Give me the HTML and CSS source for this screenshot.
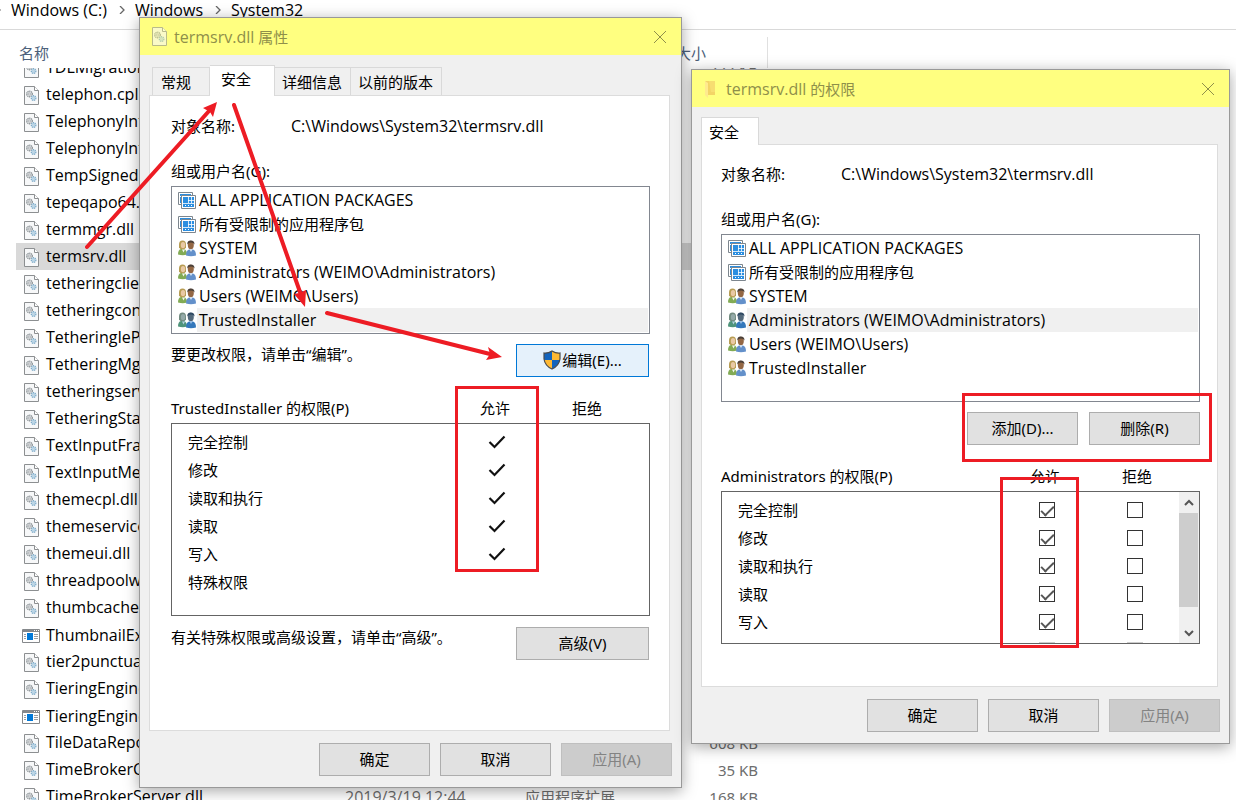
FILE: index.html
```html
<!DOCTYPE html>
<html lang="zh-CN">
<head>
<meta charset="utf-8">
<title>System32</title>
<link rel="stylesheet" href="styles.css">
</head>
<body>
<svg class="defs" aria-hidden="true">
  <defs>
    <symbol id="i-dll" viewBox="0 0 15 19">
      <path d="M.5.5h10l4 4v14H.5z" fill="#f7f8f9" stroke="#8c8f91"/>
      <path d="M10.500.5v4h4" fill="#fff" stroke="#8c8f91"/>
      <circle cx="5.500" cy="8" r="2.800" fill="#dfe2e4" stroke="#92989c" stroke-width="1.400" stroke-dasharray="1.200 .6"/>
      <circle cx="5.500" cy="8" r="1" fill="#fff" stroke="#92989c" stroke-width=".7"/>
      <circle cx="9.600" cy="12" r="2.300" fill="#cfe5f3" stroke="#7fabc8" stroke-width="1.300" stroke-dasharray="1.200 .6"/>
      <circle cx="9.600" cy="12" r=".9" fill="#fff" stroke="#7fabc8" stroke-width=".6"/>
    </symbol>
    <symbol id="i-exe" viewBox="0 0 18 14">
      <path d="M.5.5h17v13H.5z" fill="#fff" stroke="#85888b"/>
      <path d="M1 1h16v2H1z" fill="#85888b"/>
      <path d="M12 1h1v1h-1zM14 1h1v1h-1zM16 1h1v1h-1z" fill="#fff"/>
      <path d="M5 4h6v7H5z" fill="#0078d7"/>
      <path d="M2 5.500h2M2 7.500h2M2 9.500h2M12 5.500h4M12 7.500h4M12 9.500h4" stroke="#9a9da0"/>
    </symbol>
    <symbol id="i-pkg" viewBox="0 0 18 17">
      <path d="M.5.5h14v12H.5z" fill="#fff" stroke="#7d868e"/>
      <path d="M2 2h11v2H2zM2 5h2v6H2z" fill="#2b8ee0"/>
      <path d="M3.500 3.500h14v13h-14z" fill="#fff" stroke="#7d868e"/>
      <path d="M5 5h11v10H5z" fill="#2b8ee0"/>
      <path d="M5 11.500h11M10.500 5v6M13.500 5v6M10 8.500h6" stroke="#fff" stroke-width=".8"/>
      <path d="M7 13.500h1M10 13.500h1M13 13.500h1" stroke="#fff"/>
    </symbol>
    <symbol id="i-users" viewBox="0 0 18 16">
      <path d="M0 14q0-5 3-5.500h3q3 1 3 5.500-4 1.500-9 0z" fill="#82ab55"/>
      <path d="M1 4q0-4 3.500-4T8 4v3q-1 2-3.500 2T1 7z" fill="#b79c53"/>
      <ellipse cx="5" cy="4.600" rx="2.200" ry="3.200" fill="#e9c9a4"/>
      <path d="M4 9l1.500 3L7 9z" fill="#f3f6ee"/>
      <path d="M8 15q0-5 3-6h4q3 1 3 6-5 1.500-10 0z" fill="#6390ca"/>
      <ellipse cx="12.800" cy="4.500" rx="3" ry="4.200" fill="#936744"/>
      <path d="M9.300 4q-.3-4 3.500-4t3.700 4q-1-2-3.500-2T9.300 4z" fill="#4b4039"/>
      <path d="M11.500 8.800l1.500 2.700 1.600-2.700z" fill="#dce8f5"/>
    </symbol>
    <symbol id="i-users-sel" viewBox="0 0 18 16">
      <path d="M0 14q0-5 3-5.500h3q3 1 3 5.500-4 1.500-9 0z" fill="#4f947b"/>
      <path d="M1 4q0-4 3.500-4T8 4v3q-1 2-3.500 2T1 7z" fill="#728b80"/>
      <ellipse cx="5" cy="4.600" rx="2.200" ry="3.200" fill="#95aaa9"/>
      <path d="M4 9l1.500 3L7 9z" fill="#b5cfe0"/>
      <path d="M8 15q0-5 3-6h4q3 1 3 6-5 1.500-10 0z" fill="#3478bb"/>
      <ellipse cx="12.800" cy="4.500" rx="3" ry="4.200" fill="#53697b"/>
      <path d="M9.300 4q-.3-4 3.500-4t3.700 4q-1-2-3.500-2T9.300 4z" fill="#2f4963"/>
      <path d="M11.500 8.800l1.500 2.700 1.600-2.700z" fill="#9cc1e6"/>
    </symbol>
    <symbol id="i-shield" viewBox="0 0 18 20">
      <path d="M9 1Q5 3.500 1 3v6q1 7 8 10z" fill="#1364bd"/>
      <path d="M9 1q4 2.500 8 2v6q-1 7-8 10z" fill="#ffb933"/>
      <path d="M1 10h8v9Q2.500 16 1 10z" fill="#ffb933"/>
      <path d="M9 10h8q-1.500 6-8 9z" fill="#1364bd"/>
      <path d="M9 1Q5 3.500 1 3v6q1 7 8 10 7-3 8-10V3q-4 .5-8-2z" fill="none" stroke="#4c4c4c" stroke-width="1.200"/>
    </symbol>
    <symbol id="i-folder" viewBox="0 0 12 18">
      <path d="M1 1h10v14H4z" fill="#efc35c"/>
      <path d="M5 1h6v11H7z" fill="#f5cf6c"/>
      <path d="M1 1l3 2v15l-3-3z" fill="#ffe294"/>
    </symbol>
    <symbol id="i-close" viewBox="0 0 14 14">
      <path d="M1 1l12 12M13 1L1 13" fill="none" stroke="currentColor"/>
    </symbol>
    <symbol id="i-check" viewBox="0 0 18 14">
      <path d="M1.500 7l5 5L16.500 1.500" fill="none" stroke="#111" stroke-width="2.200"/>
    </symbol>
    <symbol id="i-up" viewBox="0 0 10 8">
      <path d="M1 6l4-4 4 4" fill="none" stroke="#555" stroke-width="2"/>
    </symbol>
    <symbol id="i-down" viewBox="0 0 10 8">
      <path d="M1 2l4 4 4-4" fill="none" stroke="#555" stroke-width="2"/>
    </symbol>
    <symbol id="i-next" viewBox="0 0 6 8">
      <path d="M1 0l4 4-4 4" fill="none" stroke="#666" stroke-width="1.300"/>
    </symbol>
  </defs>
</svg>

<main class="desktop">
  <section class="explorer">
    <nav class="crumbs latin">
      <svg class="sep"><use href="#i-next"/></svg><a href="#">Windows (C:)</a>
      <svg class="sep"><use href="#i-next"/></svg><a href="#">Windows</a>
      <svg class="sep"><use href="#i-next"/></svg><a href="#">System32</a>
    </nav>
    <div class="columns"><span class="c-name">名称</span><span class="c-size">大小</span></div>
    <div class="files">
      <table>
        <colgroup><col class="w-name"><col class="w-date"><col class="w-type"><col class="w-size"></colgroup>
        <tbody>
          <tr><td><svg class="fi"><use href="#i-dll"/></svg>TDLMigration</td><td></td><td></td><td>222 KB</td></tr>
          <tr><td><svg class="fi"><use href="#i-dll"/></svg>telephon.cpl</td><td></td><td></td><td></td></tr>
          <tr><td><svg class="fi"><use href="#i-dll"/></svg>TelephonyInter</td><td></td><td></td><td></td></tr>
          <tr><td><svg class="fi"><use href="#i-dll"/></svg>TelephonyInter</td><td></td><td></td><td></td></tr>
          <tr><td><svg class="fi"><use href="#i-dll"/></svg>TempSigned</td><td></td><td></td><td></td></tr>
          <tr><td><svg class="fi"><use href="#i-dll"/></svg>tepeqapo64.dll</td><td></td><td></td><td></td></tr>
          <tr><td><svg class="fi"><use href="#i-dll"/></svg>termmgr.dll</td><td></td><td></td><td></td></tr>
          <tr class="selected"><td><svg class="fi"><use href="#i-dll"/></svg>termsrv.dll</td><td></td><td></td><td></td></tr>
          <tr><td><svg class="fi"><use href="#i-dll"/></svg>tetheringclient</td><td></td><td></td><td></td></tr>
          <tr><td><svg class="fi"><use href="#i-dll"/></svg>tetheringconfig</td><td></td><td></td><td></td></tr>
          <tr><td><svg class="fi"><use href="#i-dll"/></svg>TetheringIePro</td><td></td><td></td><td></td></tr>
          <tr><td><svg class="fi"><use href="#i-dll"/></svg>TetheringMgr</td><td></td><td></td><td></td></tr>
          <tr><td><svg class="fi"><use href="#i-dll"/></svg>tetheringservice</td><td></td><td></td><td></td></tr>
          <tr><td><svg class="fi"><use href="#i-dll"/></svg>TetheringStation</td><td></td><td></td><td></td></tr>
          <tr><td><svg class="fi"><use href="#i-dll"/></svg>TextInputFramework</td><td></td><td></td><td></td></tr>
          <tr><td><svg class="fi"><use href="#i-dll"/></svg>TextInputMethod</td><td></td><td></td><td></td></tr>
          <tr><td><svg class="fi"><use href="#i-dll"/></svg>themecpl.dll</td><td></td><td></td><td></td></tr>
          <tr><td><svg class="fi"><use href="#i-dll"/></svg>themeservice</td><td></td><td></td><td></td></tr>
          <tr><td><svg class="fi"><use href="#i-dll"/></svg>themeui.dll</td><td></td><td></td><td></td></tr>
          <tr><td><svg class="fi"><use href="#i-dll"/></svg>threadpoolwin</td><td></td><td></td><td></td></tr>
          <tr><td><svg class="fi"><use href="#i-dll"/></svg>thumbcache.dll</td><td></td><td></td><td></td></tr>
          <tr><td><svg class="fi exe"><use href="#i-exe"/></svg>ThumbnailExtract</td><td></td><td></td><td></td></tr>
          <tr><td><svg class="fi"><use href="#i-dll"/></svg>tier2punctuation</td><td></td><td></td><td></td></tr>
          <tr><td><svg class="fi"><use href="#i-dll"/></svg>TieringEngine</td><td></td><td></td><td></td></tr>
          <tr><td><svg class="fi exe"><use href="#i-exe"/></svg>TieringEngine</td><td></td><td></td><td></td></tr>
          <tr><td><svg class="fi"><use href="#i-dll"/></svg>TileDataRepo</td><td></td><td></td><td>608 KB</td></tr>
          <tr><td><svg class="fi"><use href="#i-dll"/></svg>TimeBrokerClient</td><td></td><td></td><td>35 KB</td></tr>
          <tr><td><svg class="fi"><use href="#i-dll"/></svg>TimeBrokerServer.dll</td><td class="latin">2019/3/19 12:44</td><td>应用程序扩展</td><td>168 KB</td></tr>
        </tbody>
      </table>
    </div>
  </section>

  <section class="window props" role="dialog" aria-labelledby="t1">
    <header class="titlebar">
      <svg class="ti-dll"><use href="#i-dll"/></svg>
      <h1 id="t1"><span class="latin">termsrv.dll</span> 属性</h1>
      <button class="close" type="button" aria-label="关闭"><svg><use href="#i-close"/></svg></button>
    </header>
    <div class="tabs">
      <button type="button">常规</button><button type="button" class="active">安全</button><button type="button">详细信息</button><button type="button">以前的版本</button>
    </div>
    <div class="page">
      <div class="object"><span>对象名称:</span><span class="latin">C:\Windows\System32\termsrv.dll</span></div>
      <p class="label" id="g1">组或用户名(G):</p>
      <ul class="listbox" aria-labelledby="g1">
        <li><svg><use href="#i-pkg"/></svg><span class="latin">ALL APPLICATION PACKAGES</span></li>
        <li><svg><use href="#i-pkg"/></svg><span>所有受限制的应用程序包</span></li>
        <li><svg><use href="#i-users"/></svg><span class="latin">SYSTEM</span></li>
        <li><svg><use href="#i-users"/></svg><span class="latin">Administrators (WEIMO\Administrators)</span></li>
        <li><svg><use href="#i-users"/></svg><span class="latin">Users (WEIMO\Users)</span></li>
        <li class="current"><svg><use href="#i-users-sel"/></svg><span class="latin">TrustedInstaller</span></li>
      </ul>
      <div class="action"><p>要更改权限，请单击“编辑”。</p><button type="button" class="btn wide primary"><svg><use href="#i-shield"/></svg>编辑(E)...</button></div>
      <div class="permhead"><span>TrustedInstaller 的权限(P)</span><span>允许</span><span>拒绝</span></div>
      <div class="permbox">
        <table>
          <tbody>
            <tr><th scope="row">完全控制</th><td><svg><use href="#i-check"/></svg></td><td></td></tr>
            <tr><th scope="row">修改</th><td><svg><use href="#i-check"/></svg></td><td></td></tr>
            <tr><th scope="row">读取和执行</th><td><svg><use href="#i-check"/></svg></td><td></td></tr>
            <tr><th scope="row">读取</th><td><svg><use href="#i-check"/></svg></td><td></td></tr>
            <tr><th scope="row">写入</th><td><svg><use href="#i-check"/></svg></td><td></td></tr>
            <tr><th scope="row">特殊权限</th><td></td><td></td></tr>
          </tbody>
        </table>
      </div>
      <div class="action"><p>有关特殊权限或高级设置，请单击“高级”。</p><button type="button" class="btn wide">高级(V)</button></div>
    </div>
    <footer class="buttons"><button type="button" class="btn">确定</button><button type="button" class="btn">取消</button><button type="button" class="btn" disabled>应用(A)</button></footer>
  </section>

  <section class="window perms" role="dialog" aria-labelledby="t2">
    <header class="titlebar">
      <svg class="ti-folder"><use href="#i-folder"/></svg>
      <h1 id="t2"><span class="latin">termsrv.dll</span> 的权限</h1>
      <button class="close" type="button" aria-label="关闭"><svg><use href="#i-close"/></svg></button>
    </header>
    <div class="tabs"><button type="button" class="active">安全</button></div>
    <div class="page">
      <div class="object"><span>对象名称:</span><span class="latin">C:\Windows\System32\termsrv.dll</span></div>
      <p class="label" id="g2">组或用户名(G):</p>
      <ul class="listbox" aria-labelledby="g2">
        <li><svg><use href="#i-pkg"/></svg><span class="latin">ALL APPLICATION PACKAGES</span></li>
        <li><svg><use href="#i-pkg"/></svg><span>所有受限制的应用程序包</span></li>
        <li><svg><use href="#i-users"/></svg><span class="latin">SYSTEM</span></li>
        <li class="current"><svg><use href="#i-users-sel"/></svg><span class="latin">Administrators (WEIMO\Administrators)</span></li>
        <li><svg><use href="#i-users"/></svg><span class="latin">Users (WEIMO\Users)</span></li>
        <li><svg><use href="#i-users"/></svg><span class="latin">TrustedInstaller</span></li>
      </ul>
      <div class="edit"><button type="button" class="btn">添加(D)...</button><button type="button" class="btn">删除(R)</button></div>
      <div class="permhead"><span>Administrators 的权限(P)</span><span>允许</span><span>拒绝</span></div>
      <div class="permbox">
        <table>
          <tbody>
            <tr><th scope="row">完全控制</th><td><input type="checkbox" checked aria-label="完全控制 允许"></td><td><input type="checkbox" aria-label="完全控制 拒绝"></td></tr>
            <tr><th scope="row">修改</th><td><input type="checkbox" checked aria-label="修改 允许"></td><td><input type="checkbox" aria-label="修改 拒绝"></td></tr>
            <tr><th scope="row">读取和执行</th><td><input type="checkbox" checked aria-label="读取和执行 允许"></td><td><input type="checkbox" aria-label="读取和执行 拒绝"></td></tr>
            <tr><th scope="row">读取</th><td><input type="checkbox" checked aria-label="读取 允许"></td><td><input type="checkbox" aria-label="读取 拒绝"></td></tr>
            <tr><th scope="row">写入</th><td><input type="checkbox" checked aria-label="写入 允许"></td><td><input type="checkbox" aria-label="写入 拒绝"></td></tr>
            <tr><th scope="row"></th><td><input type="checkbox" disabled aria-label="特殊权限 允许"></td><td><input type="checkbox" disabled aria-label="特殊权限 拒绝"></td></tr>
          </tbody>
        </table>
        <div class="scrollbar"><button type="button" aria-label="向上"><svg><use href="#i-up"/></svg></button><div class="track"><div class="thumb"></div></div><button type="button" aria-label="向下"><svg><use href="#i-down"/></svg></button></div>
      </div>
    </div>
    <footer class="buttons"><button type="button" class="btn">确定</button><button type="button" class="btn">取消</button><button type="button" class="btn" disabled>应用(A)</button></footer>
  </section>

  <svg class="marks" width="1236" height="800" aria-hidden="true">
    <g fill="none" stroke="#ed1c24" stroke-width="3">
      <path d="M456.500 387.500h81v183h-81zM963.500 394.500h247v66h-247zM1001.500 478.500h76v168h-76z"/>
      <path d="M87 247L209 111M234 105l66 187M327 313l163 41" stroke-width="4" stroke-linecap="round"/>
    </g>
    <path d="M217 102l-4 15-3-5-7-4zM305 307l-11-13 5-1 7-3zM502 357l-16 3 4-6-2-7z" fill="#ed1c24"/>
  </svg>
</main>
</body>
</html>
```
FILE: styles.css
```css
* { box-sizing: border-box; }

body {
  margin: 0;
  background: #fff;
  color: #000;
  font: 15px/20px "Noto Sans", "Noto Sans CJK SC", sans-serif;
}

button, input { font: inherit; color: inherit; }
p, h1, ul { margin: 0; padding: 0; font: inherit; }
.defs { position: absolute; width: 0; height: 0; }
.latin { font-family: "Open Sans", "Noto Sans CJK SC", sans-serif; font-size: 16px; }

.desktop {
  position: relative;
  height: 100vh;
  overflow: hidden;
}

/* file explorer */
.explorer {
  display: flex;
  flex-direction: column;
  height: 100%;
}

.crumbs {
  display: flex;
  align-items: center;
  height: 30px;
  padding-bottom: 10px;
  border-bottom: 1px solid #d9d9d9;
}

.crumbs a { color: inherit; text-decoration: none; }
.sep { width: 6px; height: 8px; margin: 0 10px 0 12px; }
.sep:first-child { margin: 0 10px 0 -5px; }

.columns {
  display: flex;
  width: 768px;
  height: 38px;
  padding: 7px 0 0 19px;
  color: #4c607a;
}

.columns span { padding-top: 6px; }
.columns .c-name { flex: 1; }
.columns .c-size {
  width: 92px;
  border-right: 1px solid #e0e0e0;
}

.files {
  flex: 1;
  overflow: hidden;
  padding-left: 16px;
}

.files table {
  width: 752px;
  margin-top: -14px;
  table-layout: fixed;
  border-collapse: collapse;
}

.w-name { width: 329px; }
.w-date { width: 180px; }
.w-type { width: 140px; }

.files td {
  height: 27px;
  padding: 0;
  color: #6d6d6d;
  white-space: nowrap;
}

.files td:first-child {
  padding-left: 8px;
  color: #000;
  font-family: "Open Sans", sans-serif;
  font-size: 16px;
}

.files td:last-child { text-align: right; padding-right: 10px; }
.files .selected { background: #d9d9d9; }

.fi {
  width: 15px;
  height: 19px;
  margin-right: 7px;
  vertical-align: middle;
}

.fi.exe { width: 18px; height: 14px; margin: 0 6px 0 -2px; }

/* dialog windows */
.window {
  position: absolute;
  display: flex;
  flex-direction: column;
  background: #f0f0f0;
  border: 1px solid #999;
  box-shadow: 0 3px 14px rgba(0, 0, 0, .35);
}

.props { left: 139px; top: 17px; width: 543px; }
.perms { left: 691px; top: 69px; width: 539px; }

.titlebar {
  display: flex;
  align-items: center;
  height: 37px;
  padding: 0 14px 0 12px;
  background: #ffff80;
  color: #8f8f4a;
}

.titlebar h1 { flex: 1; }
.ti-dll { width: 15px; height: 19px; margin-right: 7px; opacity: .6; }
.ti-folder { width: 12px; height: 18px; margin-right: 10px; opacity: .7; }

.close {
  display: flex;
  padding: 0;
  border: 0;
  background: none;
}

.close svg { width: 14px; height: 14px; }

.tabs {
  display: flex;
  align-items: flex-end;
  padding: 10px 9px 0 12px;
}

.perms .tabs { padding-left: 9px; }

.tabs button {
  height: 28px;
  padding: 0 8px 0 7px;
  border: 1px solid #d9d9d9;
  border-width: 1px 1px 0 0;
  background: #f0f0f0;
  text-align: left;
}

.tabs button:first-child { border-left-width: 1px; }
.props .tabs button:first-child { width: 58px; padding-left: 8px; }

.props .tabs .active {
  width: 65px;
  height: 31px;
  padding-bottom: 4px;
  padding-left: 11px;
}

.tabs .active {
  z-index: 1;
  width: 58px;
  height: 28px;
  margin-bottom: -1px;
  background: #fff;
}

.page {
  margin: 0 11px 0 9px;
  padding: 20px 19px 70px 21px;
  border: 1px solid #dcdcdc;
  background: #fff;
}

.perms .page { padding: 19px 17px 42px 19px; }

.object { display: flex; }
.object span:first-child { width: 120px; }
.label { margin: 25px 0 5px; }

.listbox {
  list-style: none;
  padding: 1px 0;
  border: 1px solid #828790;
}

.props .listbox { margin-bottom: 10px; }
.perms .listbox { padding-bottom: 21px; }

.listbox li { display: flex; align-items: center; height: 24px; padding: 0 1px 0 6px; }
.listbox svg { width: 18px; height: 17px; margin-right: 1px; }
.listbox span { flex: 1; padding: 2px; }
.listbox .current span { background: #f0f0f0; }

.action {
  display: flex;
  align-items: flex-start;
  justify-content: space-between;
  padding-right: 1px;
}

.btn {
  display: flex;
  align-items: center;
  justify-content: center;
  width: 111px;
  height: 33px;
  padding: 0 0 2px;
  border: 1px solid #adadad;
  background: #e1e1e1;
}

.btn.wide { width: 133px; }
.btn.primary { border-color: #0078d7; background: #e5f1fb; }
.btn svg { width: 18px; height: 20px; margin-right: 1px; }
.btn:disabled { border-color: #bfbfbf; background: #ccc; color: #838383; }

.edit {
  display: flex;
  justify-content: flex-end;
  gap: 11px;
  margin-top: 10px;
}

.permhead {
  display: flex;
  margin: 21px 0 5px;
  padding-right: 17px;
}

.permhead span { width: 92px; text-align: center; }
.permhead span:first-child { flex: 1; text-align: left; }

.permbox {
  display: flex;
  border: 1px solid #646464;
}

.props .permbox { padding: 4px 14px 19px 0; margin-bottom: 11px; }
.perms .permbox { height: 153px; overflow: hidden; }
.perms .permbox table { margin-top: 4px; }

.permbox table {
  flex: 1;
  align-self: flex-start;
  table-layout: fixed;
  border-collapse: collapse;
}

.permbox th, .permbox td { height: 28px; padding: 0; }
.permbox th { padding-left: 16px; font-weight: normal; text-align: left; }
.permbox td { width: 92px; text-align: center; }
.perms .permbox td { width: 88px; }
.permbox td svg { display: block; width: 18px; height: 14px; margin: auto; }

.permbox input {
  appearance: none;
  display: block;
  width: 16px;
  height: 16px;
  margin: auto;
  border: 1px solid #333;
  background: #fff;
}

.permbox input:disabled { border-color: #ccc; background: #ccc; }

.permbox input:checked::before {
  content: "";
  display: block;
  width: 11px;
  height: 5px;
  margin: 3px 0 0 1px;
  border: solid #555;
  border-width: 0 0 2px 2px;
  transform: rotate(-45deg);
}

.scrollbar {
  display: flex;
  flex-direction: column;
  width: 20px;
  padding-right: 1px;
  background: #f0f0f0;
}

.scrollbar button {
  display: flex;
  align-items: center;
  justify-content: center;
  height: 21px;
  padding: 0;
  border: 0;
  background: none;
}

.scrollbar svg { width: 10px; height: 8px; }
.track { flex: 1; }
.thumb { height: 94px; background: #cdcdcd; }

.buttons {
  display: flex;
  justify-content: flex-end;
  gap: 10px;
  padding: 12px 9px 11px;
}

/* hand-drawn callouts over both windows */
.marks {
  position: absolute;
  left: 0;
  top: 0;
  pointer-events: none;
}
```
